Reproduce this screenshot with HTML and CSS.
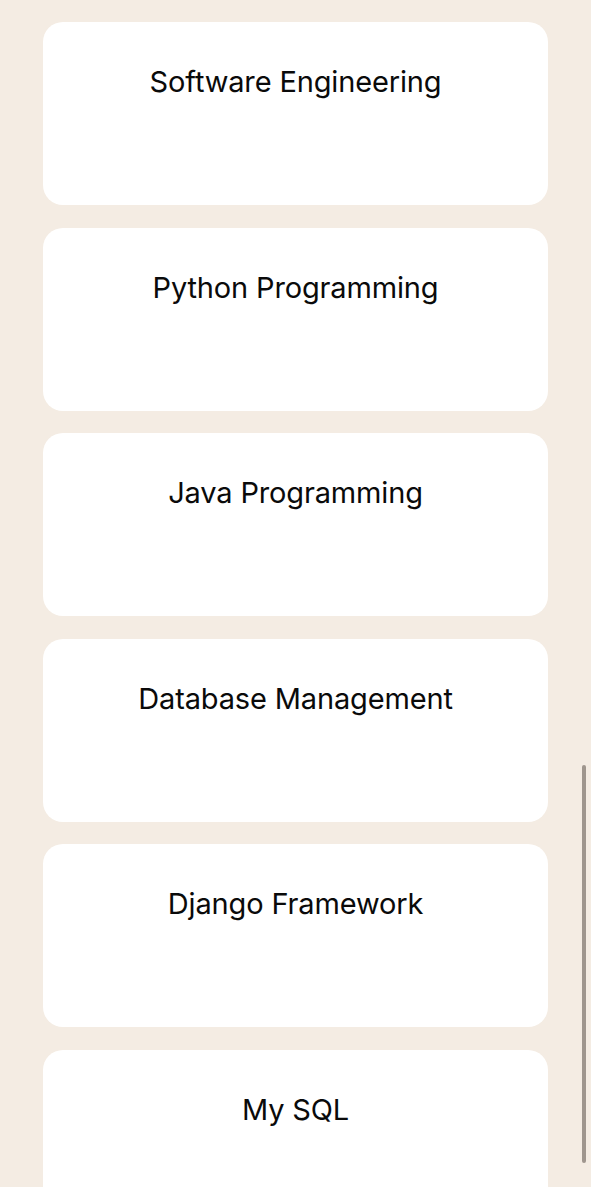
FILE: index.html
```html
<!DOCTYPE html>
<html>
<head>
<meta charset="utf-8">
<link rel="stylesheet" href="styles.css">
</head>
<body>
<main class="list">
  <div class="card"><span class="title">Software Engineering</span></div>
  <div class="card"><span class="title">Python Programming</span></div>
  <div class="card"><span class="title">Java Programming</span></div>
  <div class="card"><span class="title">Database Management</span></div>
  <div class="card"><span class="title">Django Framework</span></div>
  <div class="card"><span class="title">My SQL</span></div>
</main>
<div class="scrollbar"></div>
</body>
</html>
```
FILE: styles.css
```css
html, body {
  margin: 0;
  padding: 0;
  background: #f4ece3;
  height: 1187px;
  overflow: hidden;
}
.list {
  display: flex;
  flex-direction: column;
  gap: 22.6px;
  padding: 22px 43px 0 43px;
}
.card {
  background: #ffffff;
  border-radius: 20px;
  height: 183px;
  flex-shrink: 0;
  box-sizing: border-box;
  padding-top: 42px;
  text-align: center;
}
.title {
  font-family: Inter, "Liberation Sans", sans-serif;
  font-size: 29px;
  line-height: 36px;
  color: #0a0a0a;
  letter-spacing: -0.15px;
}
.scrollbar {
  position: fixed;
  left: 582px;
  top: 765px;
  width: 4px;
  height: 398px;
  border-radius: 2px;
  background: #9f968e;
}
```
